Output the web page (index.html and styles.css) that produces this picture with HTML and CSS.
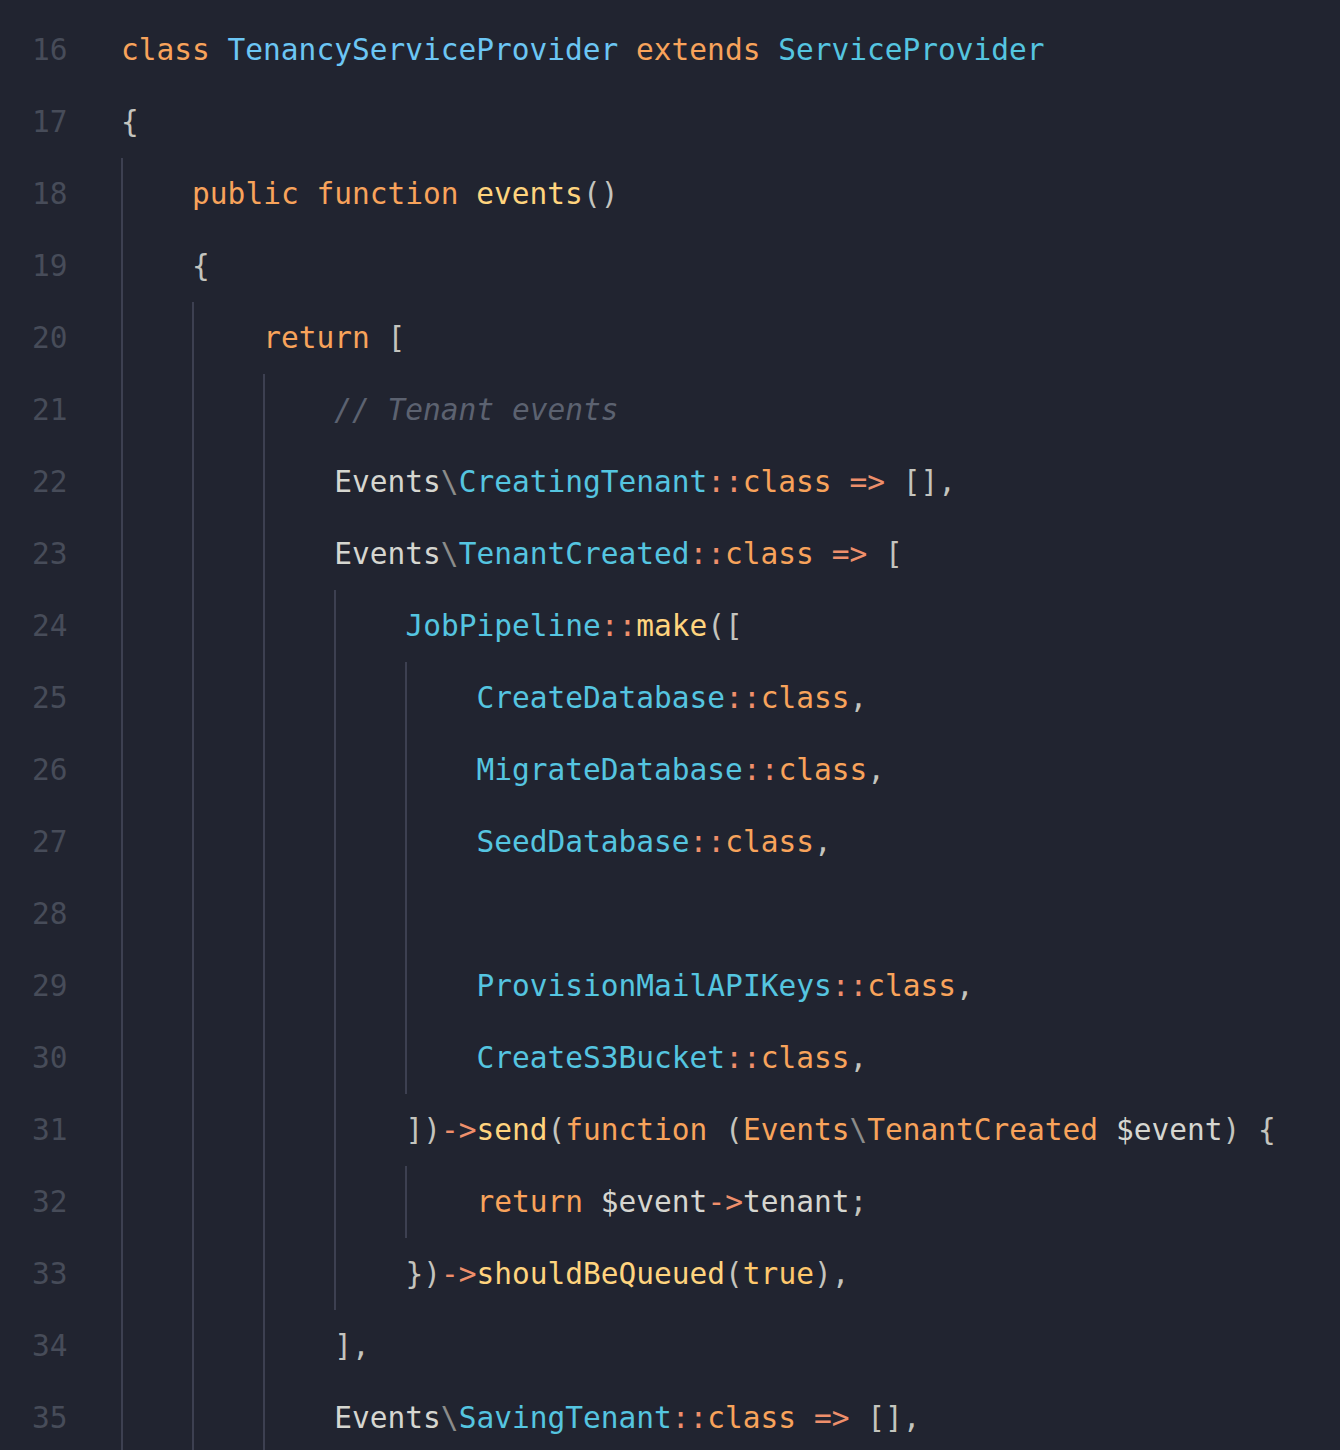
FILE: index.html
```html
<!DOCTYPE html>
<html lang="en">
<head>
<meta charset="utf-8">
<title>TenancyServiceProvider</title>
<link rel="stylesheet" href="styles.css">
</head>
<body>
<div class="editor">
  <div class="line"><span class="ln">16</span><span class="code"><span class="kw">class</span> <span class="cls">TenancyServiceProvider</span> <span class="kw">extends</span> <span class="type">ServiceProvider</span></span></div>
  <div class="line"><span class="ln">17</span><span class="code"><span class="pn">{</span></span></div>
  <div class="line"><span class="ln">18</span><span class="g"></span><span class="code"><span class="kw">public</span> <span class="kw">function</span> <span class="fn">events</span><span class="pn">()</span></span></div>
  <div class="line"><span class="ln">19</span><span class="g"></span><span class="code"><span class="pn">{</span></span></div>
  <div class="line"><span class="ln">20</span><span class="g"></span><span class="g"></span><span class="code"><span class="kw">return</span> <span class="pn">[</span></span></div>
  <div class="line"><span class="ln">21</span><span class="g"></span><span class="g"></span><span class="g"></span><span class="code"><span class="cm">// Tenant events</span></span></div>
  <div class="line"><span class="ln">22</span><span class="g"></span><span class="g"></span><span class="g"></span><span class="code"><span class="tx">Events</span><span class="bs">\</span><span class="type">CreatingTenant</span><span class="op">::</span><span class="kw">class</span> <span class="op">=&gt;</span> <span class="pn">[],</span></span></div>
  <div class="line"><span class="ln">23</span><span class="g"></span><span class="g"></span><span class="g"></span><span class="code"><span class="tx">Events</span><span class="bs">\</span><span class="type">TenantCreated</span><span class="op">::</span><span class="kw">class</span> <span class="op">=&gt;</span> <span class="pn">[</span></span></div>
  <div class="line"><span class="ln">24</span><span class="g"></span><span class="g"></span><span class="g"></span><span class="g"></span><span class="code"><span class="type">JobPipeline</span><span class="op">::</span><span class="fn">make</span><span class="pn">([</span></span></div>
  <div class="line"><span class="ln">25</span><span class="g"></span><span class="g"></span><span class="g"></span><span class="g"></span><span class="g"></span><span class="code"><span class="type">CreateDatabase</span><span class="op">::</span><span class="kw">class</span><span class="pn">,</span></span></div>
  <div class="line"><span class="ln">26</span><span class="g"></span><span class="g"></span><span class="g"></span><span class="g"></span><span class="g"></span><span class="code"><span class="type">MigrateDatabase</span><span class="op">::</span><span class="kw">class</span><span class="pn">,</span></span></div>
  <div class="line"><span class="ln">27</span><span class="g"></span><span class="g"></span><span class="g"></span><span class="g"></span><span class="g"></span><span class="code"><span class="type">SeedDatabase</span><span class="op">::</span><span class="kw">class</span><span class="pn">,</span></span></div>
  <div class="line"><span class="ln">28</span><span class="g"></span><span class="g"></span><span class="g"></span><span class="g"></span><span class="g"></span><span class="code"></span></div>
  <div class="line"><span class="ln">29</span><span class="g"></span><span class="g"></span><span class="g"></span><span class="g"></span><span class="g"></span><span class="code"><span class="type">ProvisionMailAPIKeys</span><span class="op">::</span><span class="kw">class</span><span class="pn">,</span></span></div>
  <div class="line"><span class="ln">30</span><span class="g"></span><span class="g"></span><span class="g"></span><span class="g"></span><span class="g"></span><span class="code"><span class="type">CreateS3Bucket</span><span class="op">::</span><span class="kw">class</span><span class="pn">,</span></span></div>
  <div class="line"><span class="ln">31</span><span class="g"></span><span class="g"></span><span class="g"></span><span class="g"></span><span class="code"><span class="pn">])</span><span class="op">-&gt;</span><span class="fn">send</span><span class="pn">(</span><span class="kw">function</span> <span class="pn">(</span><span class="kw">Events</span><span class="bs">\</span><span class="kw">TenantCreated</span> <span class="tx">$event</span><span class="pn">)</span> <span class="pn">{</span></span></div>
  <div class="line"><span class="ln">32</span><span class="g"></span><span class="g"></span><span class="g"></span><span class="g"></span><span class="g"></span><span class="code"><span class="kw">return</span> <span class="tx">$event</span><span class="op">-&gt;</span><span class="tx">tenant</span><span class="pn">;</span></span></div>
  <div class="line"><span class="ln">33</span><span class="g"></span><span class="g"></span><span class="g"></span><span class="g"></span><span class="code"><span class="pn">})</span><span class="op">-&gt;</span><span class="fn">shouldBeQueued</span><span class="pn">(</span><span class="bool">true</span><span class="pn">),</span></span></div>
  <div class="line"><span class="ln">34</span><span class="g"></span><span class="g"></span><span class="g"></span><span class="code"><span class="pn">],</span></span></div>
  <div class="line"><span class="ln">35</span><span class="g"></span><span class="g"></span><span class="g"></span><span class="code"><span class="tx">Events</span><span class="bs">\</span><span class="type">SavingTenant</span><span class="op">::</span><span class="kw">class</span> <span class="op">=&gt;</span> <span class="pn">[],</span></span></div>
</div>
</body>
</html>
```

FILE: styles.css
```css
html, body {
  margin: 0;
  padding: 0;
  background: #212430;
}

.editor {
  padding-top: 14px;
  font-family: "DejaVu Sans Mono", "Liberation Mono", monospace;
  font-size: 29.5px;
  color: #d2d2cc;
}

.line {
  display: flex;
  height: 72px;
  align-items: center;
}

.ln {
  width: 121px;
  box-sizing: border-box;
  padding-left: 32px;
  color: #474c59;
  flex: none;
}

.g {
  flex: none;
  align-self: stretch;
  width: 71.1px;
  box-sizing: border-box;
  border-left: 2px solid #3d4051;
}

.code {
  flex: none;
  white-space: pre;
}

.kw { color: #f8a35b; }
.cls { color: #6cc6f4; }
.type { color: #55c5e0; }
.fn { color: #ffd47e; }
.op { color: #ee8f6b; }
.pn { color: #c4c4be; }
.tx { color: #d6d6d0; }
.bs { color: #8c8c8a; }
.cm { color: #5c6270; font-style: italic; }
.bool { color: #ffc86c; }
```
